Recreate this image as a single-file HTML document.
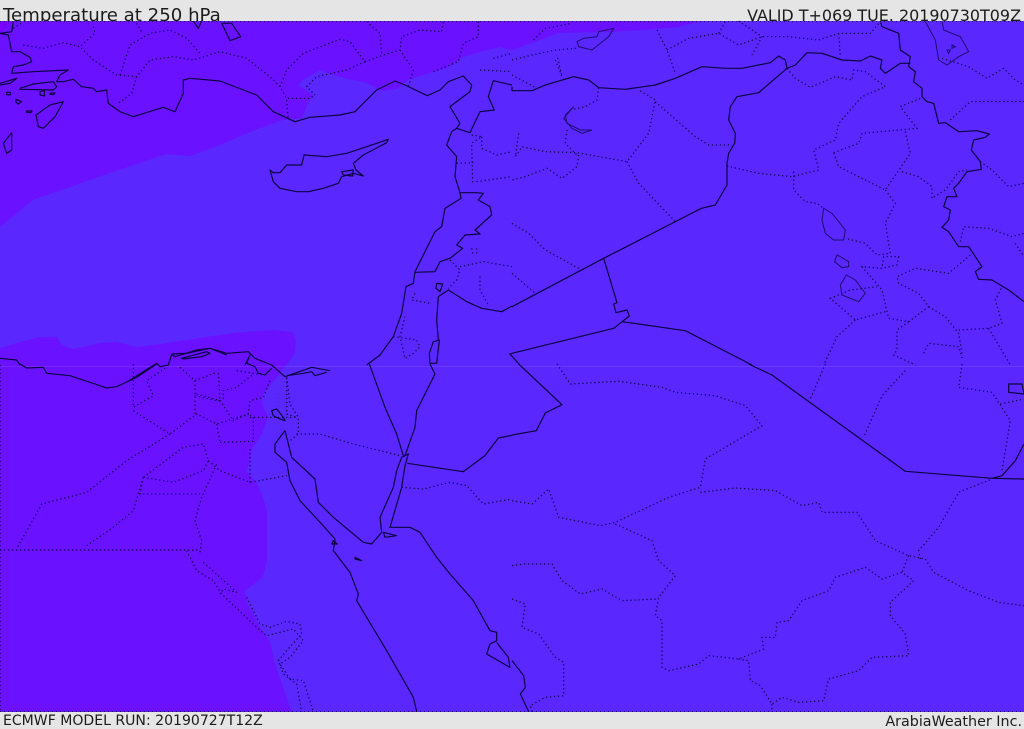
<!DOCTYPE html>
<html><head><meta charset="utf-8"><title>Temperature at 250 hPa</title>
<style>
html,body{margin:0;padding:0;background:#e5e5e5;width:1024px;height:729px;overflow:hidden}
svg{display:block}
text{font-family:"DejaVu Sans","Liberation Sans",sans-serif;fill:#1c1c1c}
.s path{fill:none;stroke:#0c0440;stroke-width:3.6;stroke-linejoin:round}
.d path{fill:none;stroke:#0e0450;stroke-width:3.8;stroke-dasharray:3.8 8.2;stroke-linecap:butt}
.t path{fill:none;stroke:#1e0c70;stroke-width:3}
</style></head><body>
<svg width="1024" height="729" viewBox="0 0 1024 729" xmlns="http://www.w3.org/2000/svg">
<rect width="1024" height="729" fill="#e5e5e5"/>
<text x="3" y="21" font-size="18.15">Temperature at 250 hPa</text>
<text x="1021" y="21" font-size="15.95" text-anchor="end">VALID T+069 TUE. 20190730T09Z</text>
<text x="3" y="725" font-size="14.05">ECMWF MODEL RUN: 20190727T12Z</text>
<text x="1022" y="726" font-size="14.3" text-anchor="end">ArabiaWeather Inc.</text>
<rect x="0" y="21" width="1024" height="691" fill="#5a28ff"/>
<path fill="#6a12ff" d="M0 21V227L33 200 110 173 167 154 190 156 213 148 250 132 283 120 302 118 308 103 313 95 298 85 303 80 320 70 343 78 367 83 383 91 397 89 408 80 430 73 447 68 463 57 480 52 500 47 512 50 532 43 559 33 612 32 645 30 679 27 702 21Z"/>
<path fill="#7a00ff" d="M0 21H13L0 33Z"/>
<path fill="#6a12ff" d="M0 348L20 342 40 337 57 337 62 345 73 349 100 343 117 342 137 347 167 343 200 338 233 333 273 330 293 332 296 340 295 353 287 364 277 377 263 394 262 404 268 417 262 434 253 447 247 471 257 484 263 497 267 511 267 537 267 561 263 577 245 591 248 604 260 627 270 641 275 664 283 687 292 712H0Z"/>
<rect x="0" y="366" width="1024" height="1" fill="#ffffff" opacity=".09"/>
<path d="M0 21.5H1024M0 711.5H1024M.5 365V712" fill="none" stroke="#1c0c70" stroke-width="1" stroke-dasharray="1 3"/>
<path d="M512 353.4L510 354 519 364" fill="none" stroke="#0c0440" stroke-width="1.2"/>

<g transform="scale(.33333)">
<g class="s">
<path d="M0 100L25 105 35 155 60 155 90 172 95 185 70 195 40 200 35 220 100 215 205 210 180 225 170 245 190 245 220 238 245 260 280 265 290 275 320 270 325 310 360 335 400 350 490 322 525 335 550 280 550 240 570 235 660 243 770 285 820 335 885 365 930 352 1020 345 1065 335 1085 315 1130 270 1185 243 1215 255 1282 287 1320 270 1345 245 1390 228 1415 255 1410 275 1350 320 1380 370 1370 385"/>
<path d="M40 65L35 95 0 100"/>
<path d="M1370 385L1410 398 1440 335 1483 330 1465 290 1480 242 1536 255"/>
<path d="M1370 385L1355 395 1340 435 1370 470 1365 530 1380 578 1430 578 1450 580 1435 600 1470 620 1475 645 1425 690 1440 702 1395 705 1370 735 1388 745 1350 775 1320 785 1305 815 1245 817"/>
<path d="M1380 578L1383 595 1335 625 1325 680 1305 695 1245 815 1240 850 1218 860 1205 940 1180 1010 1140 1065 1100 1095"/>
<path d="M1536 918L1505 935 1445 925 1400 905 1385 895 1345 870 1315 890 1310 960 1315 1020"/>
<path d="M1300 1025L1318 1020 1310 1090 1290 1090 1288 1060Z"/>
<path d="M1310 850L1328 852 1320 875 1308 865Z"/>
<path d="M810 510L820 518 840 518 860 495 905 495 912 465 980 470 1040 460 1100 440 1165 418 1160 428 1090 465 1060 490 1068 510 1090 528 1060 520 1025 530 1015 550 970 565 925 575 890 575 840 565 820 545Z"/>
<path d="M1025 515L1060 510 1058 528 1030 525Z"/>
<path d="M190 305L150 315 108 345 115 380 130 385 165 350Z"/>
<path d="M60 265L100 252 160 245 170 260 160 270 60 268Z"/>
<path d="M0 250L50 235 30 250 0 255"/>
<path d="M10 430L35 398 35 450 20 460Z"/>
<path d="M20 277L32 277 30 285 20 284ZM48 298L65 305 55 312 47 305ZM80 333L96 333 92 338 80 337ZM120 275L133 272 133 288 120 285ZM150 280L165 278 160 284 150 283Z"/>
<path d="M580 63L595 85 605 63M665 70L695 70 722 110 690 122 680 100Z"/>
<path d="M0 1075L50 1080 60 1095M515 1062L560 1060 630 1045 680 1065"/>
</g>
<g class="d">
<path d="M70 135L130 145 190 128 240 140 280 180 350 225 410 230 450 180 520 170 580 180 660 155 740 175 810 230 840 260 860 295 930 295 945 285"/>
<path d="M40 85L70 65M280 80L285 100 240 140M360 225L390 135 450 100 510 90 560 115 600 160M410 70L425 95M410 230L395 280 355 310M860 300L865 360"/>
<path d="M840 260L860 210 910 160 1020 118 1050 125 1095 185 1040 210 950 230 920 260 945 285M1095 185L1150 165 1200 150 1205 110 1260 90 1325 95 1330 65M1100 65L1140 100 1145 160M1200 150L1240 210 1225 260"/>
<path d="M1435 65L1435 110 1390 130 1375 185 1300 215M1480 175L1536 160M1440 210L1536 215M1415 405L1445 410 1415 430 1418 550M1445 410L1445 445 1490 465 1536 455M1370 490L1420 488M1430 545L1536 530"/>
<path d="M1245 880L1235 900 1290 910M1350 780L1380 810 1370 840 1345 865M1440 830L1440 870 1465 915M1380 800L1450 785 1536 800M1180 1010L1250 1020 1260 1040 1240 1060 1215 1075 1200 1010 1215 950M1415 745L1418 760M1430 745L1430 760"/>
</g>
</g>

<g transform="translate(512 0) scale(.33333)">
<g class="s">
<path d="M0 260L0 272 60 272 100 255 185 230 230 240 260 263 340 268 430 255 490 235 570 200 640 205 690 205 775 188 800 168 820 180 825 205 850 195 885 158 930 160 990 180 1045 183 1075 168 1110 180 1105 205 1120 220 1165 190 1195 190"/>
<path d="M1105 63L1110 80 1160 100 1165 150 1195 170 1190 200 1210 215 1205 245 1230 265 1230 290 1245 305 1265 310 1280 370 1300 368 1340 395 1395 392 1432 402 1420 412 1385 420 1378 450 1405 485 1408 508 1365 515 1340 550 1325 565 1335 590 1305 590 1295 620 1315 630 1310 660 1290 682 1310 695 1340 740 1370 740 1410 800 1390 815 1400 838 1440 840 1490 870 1536 905"/>
<path d="M825 205L740 278 675 290 655 320 650 360 670 400 668 430 650 460 645 490 645 555 610 615 568 625 275 775 0 920"/>
<path d="M275 775L315 908 305 912 312 938 345 930 352 948 305 985 0 1060"/>
<path d="M330 965L520 992 720 1095"/>
</g>
<g class="t">
<path d="M185 320L160 345 165 370 205 390 240 390 210 400 180 385 155 355Z"/>
<path d="M935 625L930 660 940 700 965 720 995 720 1000 690 960 640Z"/>
<path d="M975 765L985 770 1010 785 1010 800 990 803 968 785Z"/>
<path d="M1003 825L985 855 990 885 1040 905 1060 880 1030 840Z"/>
<path d="M195 125L215 115 255 110 260 95 305 85 290 110 240 150 200 140Z"/>
<path d="M1240 65L1270 120 1280 180 1305 195 1340 170 1370 155 1345 110 1295 90 1290 65"/>
<path d="M1305 150L1315 150 1310 160ZM1320 135L1330 140 1320 145Z"/>
</g>
<g class="d">
<path d="M0 180L60 165 130 150 195 145M65 120L100 85 180 70M130 180L150 230 135 165"/>
<path d="M435 90L465 150 490 220M465 150L530 115 620 100 680 135 750 110 830 110 920 120 980 100 1075 100 1105 65M620 100L640 65M680 63L750 110 720 165M980 100L985 170"/>
<path d="M260 263L255 300 220 320 185 328M165 390L160 430 195 465M0 225L75 265M20 400L10 470 30 440 100 455 195 458 345 485 410 400 430 300 380 270M430 305L550 410 590 435 660 435M200 465L195 500 150 535 105 505 40 530 0 540M345 485L380 550 490 665M0 670L50 700 100 750 200 805M0 820L70 880"/>
<path d="M645 498L740 520 840 530 920 510 905 450 970 420 980 370 1050 290 1120 260 1060 215 1025 210 1020 240 970 230 895 262 850 235 825 205"/>
<path d="M965 458L1040 430 1050 400 1215 385 1165 320 1225 295M1180 395L1195 460 1120 570 980 500 965 458M845 515L845 570 880 605 915 610 935 625"/>
<path d="M1120 570L1150 610 1120 670 1135 760 1095 765 1060 730 1000 715M1170 515L1220 530 1260 560 1260 595 1300 570 1340 515 1365 510M1405 485L1440 510 1490 560 1536 550"/>
<path d="M1315 360L1375 305 1536 305M1290 175L1370 200 1425 235 1475 205 1510 240 1536 255M1345 725L1355 680 1430 685 1500 710 1536 700M1510 730L1536 770"/>
<path d="M1375 765L1310 820 1210 805 1155 830 1160 850 1220 880 1250 920 1190 965 1130 955 1110 870 1050 800 1110 805 1155 795 1160 770 1115 770 1110 805"/>
<path d="M1190 965L1155 990 1155 1050 1145 1065 1210 1095M1120 935L1030 960 955 895 1015 870 1095 860M1030 960L975 1010 935 1095M1340 990L1430 985 1470 970 1450 900 1470 860M1250 920L1300 950 1340 1000 1350 1060M1235 1060L1250 1030 1340 1040 1350 1075M1430 985L1495 1095"/>
</g>
</g>

<g transform="translate(130 335) scale(.33333)">
<g class="s">
<path d="M0 135L80 85 90 95 115 90 125 58 135 65 200 45 240 40 290 55 355 50 375 70 425 90 465 125 545 97 600 107"/>
<path d="M155 70L230 50 240 55 215 65 160 72Z"/>
<path d="M345 90L360 60 350 85 375 95 385 115 405 120 425 100"/>
<path d="M470 122L520 115 545 110 555 122 590 112"/>
</g>
</g>

<g transform="translate(0 364) scale(.33333)">
<g class="s">
<path d="M60 0L80 12 130 10 140 28 210 35 270 55 320 72 350 68 410 40 470 0"/>
<path d="M855 200L825 240 825 265 860 295 870 350 900 410 965 480 1005 525 1000 560 1050 625 1075 690 1070 710 1160 860 1240 1000 1250 1043"/>
<path d="M855 200L875 280 945 345 955 415 1000 460 1090 535 1115 540 1145 505 1140 460 1180 370 1190 320 1205 280 1225 270 1215 305 1205 370 1170 490 1230 490 1260 505 1310 580 1350 630 1420 710 1470 800 1490 805 1490 830 1470 840 1460 870 1530 910 1525 880 1490 835"/>
<path d="M1108 0L1155 130 1190 210 1210 275"/>
<path d="M1290 0L1305 30 1250 140 1245 190 1215 275"/>
<path d="M1222 298L1390 323 1455 275 1495 222 1536 214"/>
<path d="M815 140L830 135 850 160 855 170 840 165 820 155Z"/>
<path d="M1150 505L1190 515 1155 520ZM1065 580L1085 590 1065 585Z"/>
<path d="M1000 530L1012 540 995 540Z"/>
</g>
<g class="d">
<path d="M400 0L400 130 460 95 440 50 500 10M400 140L510 210 590 150 650 180 745 150 750 110 790 100 810 50M585 95L650 110 660 110 655 20M585 50L650 25M540 10L585 50 585 150M590 90L660 110 700 170 745 150M670 105L670 80 710 70 760 30M710 20L775 30M660 235L760 232 760 160 745 150M650 180L660 235M750 160L890 160 860 150 860 40M860 40L870 120 895 160 895 210 870 230"/>
<path d="M510 210L380 290 260 385 125 420 50 555M0 558L600 558M600 565L605 530 585 470 605 400 650 300M430 340L520 355 610 320 625 290 610 240 550 250 430 340M430 340L420 390 600 390M430 340L400 440 340 490 260 545M625 290L660 320 750 355 860 335M750 355L750 250"/>
<path d="M560 560L590 620 640 650 665 690 770 790 800 815 880 795 910 830 870 880 840 900 870 945 910 950 940 1043M610 595L710 685 670 675 660 690M740 700L780 780 810 790 860 772 900 780 905 810 860 860 835 890 850 930 890 960 905 1043"/>
<path d="M890 210L960 210 1060 240 1200 275M1205 370L1270 375 1350 355 1400 365 1450 420 1536 405"/>
</g>
</g>

<g transform="translate(512 364) scale(.33333)">
<g class="s">
<path d="M20 0L150 122 100 147 73 200 0 213"/>
<path d="M710 0L780 33 1180 322 1440 343 1536 345"/>
<path d="M1440 343L1470 335 1510 290 1536 240"/>
<path d="M0 890L35 935 40 970 25 990 50 1043"/>
<path d="M1490 60L1530 60 1536 90 1490 85Z"/>
</g>
<g class="d">
<path d="M135 0L175 60 320 52 450 70 490 85 610 95 700 125 750 185 580 285 565 370 470 400 310 475 265 485 140 460 110 375 60 420 0 410"/>
<path d="M310 480L420 530 440 590 490 635 440 700 430 755 450 770 450 910 470 920 560 900 590 875 680 885 755 855 750 820 790 820 795 775 830 770 870 710 950 680 970 640 1060 610 1110 645 1170 625 1205 650 1135 715 1135 755 1180 810 1190 875 1080 880 1040 920 950 945 935 1010 860 1015 810 1000 780 1020 745 965 715 950 710 890 680 885"/>
<path d="M565 385L670 372 790 380 870 425 920 415 930 445 1035 445 1090 530 1190 575 1240 585 1265 625 1370 680 1460 715 1536 725"/>
<path d="M1190 575L1170 625M1225 585L1220 560 1280 490 1340 385 1440 345M940 0L895 105M1180 20L1110 95 1055 220M1350 0L1340 70 1440 85 1495 170 1470 320M1465 120L1536 105"/>
<path d="M0 605L35 600 120 600 150 650 205 690 270 675 330 710 435 705M0 705L40 720 30 790 80 810 130 880 155 895 155 995 100 1000 55 1025 60 1043M780 1020L780 1043"/>
</g>
</g>
</svg>
</body></html>
